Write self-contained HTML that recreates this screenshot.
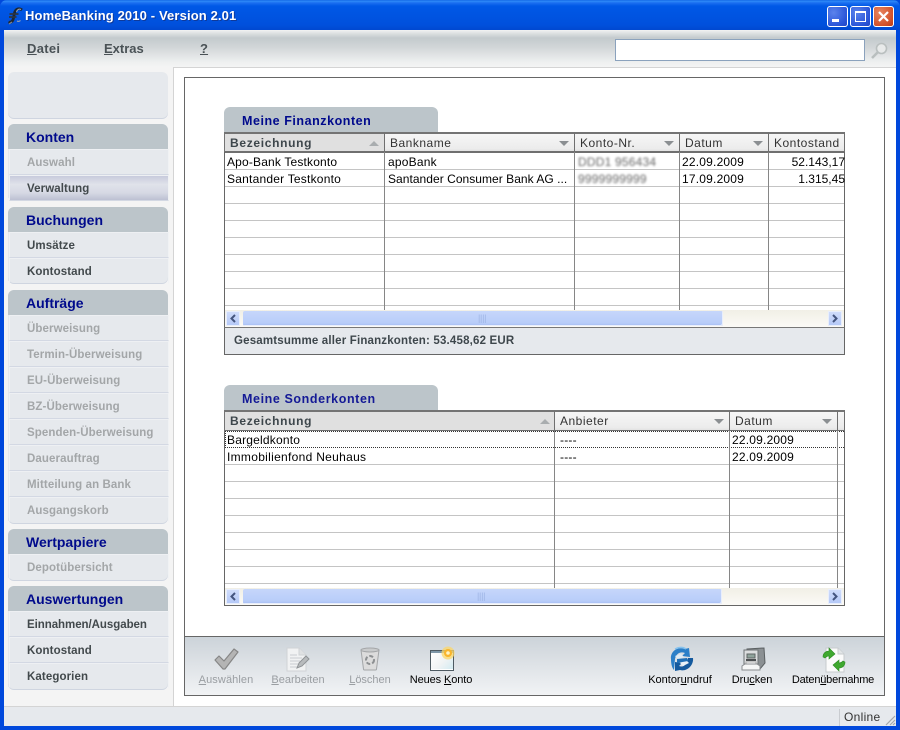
<!DOCTYPE html>
<html><head><meta charset="utf-8"><title>HomeBanking 2010</title>
<style>
html,body{margin:0;padding:0;background:#fff}
#w{position:relative;width:900px;height:730px;overflow:hidden;font-family:"Liberation Sans",sans-serif;font-size:12px;color:#000;background:#0048dc}
#w div,#w span.a,#w svg{position:absolute}
#w svg{overflow:visible}
.t{white-space:nowrap;line-height:14px}
.m{font-size:13px;font-weight:bold;color:#4a5256;top:42px;letter-spacing:.1px}
.g{left:8px;width:160px;background:#e6e9ed;border-radius:6px;box-shadow:0 1px 0 #cfd5e0}
.h{left:8px;width:160px;height:25px;background:#bcc5ca;border-radius:6px 6px 0 0}
.h b{position:absolute;left:18px;top:5px;font-size:14px;line-height:16px;color:#000a8c;white-space:nowrap}
.i{left:9px;width:158px;height:24px;border:1px solid #f0f2f4;border-bottom-color:#d3d8e3;border-top-color:#eef0f3;box-sizing:content-box}
.i b{position:absolute;left:17px;top:6px;font-size:11.5px;line-height:14px;white-space:nowrap;color:#42494c;letter-spacing:.1px}
.i.d b{color:#a3a6a8}
.tab{left:224px;width:214px;height:25px;background:#bcc5ca;border-radius:6px 6px 0 0}
.tab b{position:absolute;left:18px;top:7px;font-size:12.5px;line-height:15px;color:#000a8c;letter-spacing:.55px;white-space:nowrap}
.hd{background:linear-gradient(#f6f6f6,#ececec 85%,#e2e2e2);border-top:2px solid #747474;border-bottom:2px solid #6f6f6f;box-sizing:border-box;border-right:1px solid #6f6f6f}
.hd.s{background:#e0e0e0}
.hd span{position:absolute;left:5px;top:2px;line-height:14px;font-size:12px;letter-spacing:.5px;color:#333;white-space:nowrap}
.hd.s span{font-weight:bold;color:#3e474c;letter-spacing:.68px;font-size:12px}
.ar{width:0;height:0;border-left:5px solid transparent;border-right:5px solid transparent;border-top:5px solid #8b8f92}
.ar.u{border-top:0;border-bottom:5px solid #a9adaf}
.c{line-height:14px;white-space:nowrap;letter-spacing:.2px;color:#000}
.vl{width:1px;background:#868686}
.sb{background:linear-gradient(#f1efe6,#fbfaf6)}
.lbl{font-size:11px;line-height:13px;white-space:nowrap;text-align:center;color:#000}
.lbl.d{color:#9a9ea2}
u{text-decoration:underline}
</style></head><body><div id="w">

<!-- title bar -->
<div style="left:0;top:0;width:900px;height:30px;border-radius:7px 7px 0 0;background:linear-gradient(#0a5ce0 0,#2f8cf8 1px,#1a6df0 3px,#0058e6 6px,#0053e0 18px,#0050dc 25px,#0048d0 30px)"></div>
<svg style="left:7px;top:6px" width="18" height="20" viewBox="0 0 18 20"><path d="M15 4C12 1.500 8.500 3 7.500 7L6.500 12C6 15 4 17 1.500 16" fill="none" stroke="#1d2733" stroke-width="2.800"/><path d="M2.500 8h9M2 11h7.500" stroke="#2b3542" stroke-width="1.700"/><path d="M14 3.500C11.500 2.500 10 4 9.500 6M10 15c1 .5 2.500.5 3.500-.5" fill="none" stroke="#a1a8b3" stroke-width="1"/><path d="M5 16l-3 2" stroke="#7b8594" stroke-width="1.200"/></svg>
<div class="t" style="left:25px;top:9px;color:#fff;font-weight:bold;font-size:13px;letter-spacing:.13px;text-shadow:1px 1px 0 #0f3a9a">HomeBanking 2010 - Version 2.01</div>
<!-- window buttons -->
<div style="left:827px;top:6px;width:19px;height:19px;border:1px solid #fff;border-radius:3px;background:radial-gradient(circle at 30% 30%,#5b83ec,#2a55d8 70%,#2246c4)"></div>
<div style="left:832px;top:19px;width:7px;height:3px;background:#fff"></div>
<div style="left:850px;top:6px;width:19px;height:19px;border:1px solid #fff;border-radius:3px;background:radial-gradient(circle at 30% 30%,#5b83ec,#2a55d8 70%,#2246c4)"></div>
<div style="left:855px;top:11px;width:9px;height:8px;border:1px solid #fff;border-top:2px solid #fff"></div>
<div style="left:873px;top:6px;width:19px;height:19px;border:1px solid #fff;border-radius:3px;background:radial-gradient(circle at 30% 30%,#e88560,#d2512a 70%,#b93a16)"></div>
<svg style="left:873px;top:6px" width="21" height="21"><path d="M6 6l9 9M15 6l-9 9" stroke="#fff" stroke-width="2.200"/></svg>

<!-- client -->
<div style="left:4px;top:30px;width:892px;height:696px;background:#f4f4f4"></div>
<!-- menu band -->
<div style="left:4px;top:30px;width:892px;height:37px;background:linear-gradient(#f2f3f3 0,#dfe2e3 3px,#c3cacd 8px,#d3d7d9 18px,#eef0f0 32px,#f4f4f4 37px)"></div>
<div style="left:173px;top:67px;width:723px;height:1px;background:#d4d4d4"></div>
<div class="t m" style="left:27px;letter-spacing:.3px"><u>D</u>atei</div>
<div class="t m" style="left:104px;letter-spacing:0"><u>E</u>xtras</div>
<div class="t m" style="left:200px"><u>?</u></div>
<div style="left:615px;top:39px;width:248px;height:20px;background:#fff;border:1px solid #8ba2bd"></div>
<svg style="left:870px;top:41px" width="20" height="20"><circle cx="11.500" cy="7.500" r="5" fill="#e8eaea" stroke="#b9bfbf" stroke-width="1.600"/><path d="M8 11l-6 6" stroke="#b9bfbf" stroke-width="2.600"/></svg>

<!-- content -->
<div style="left:173px;top:67px;width:1px;height:639px;background:#d4d4d4"></div>
<div style="left:174px;top:68px;width:722px;height:638px;background:#fff"></div>
<div style="left:184px;top:77px;width:699px;height:617px;border:1px solid #666;background:#fff"></div>

<!-- sidebar -->
<div class="g" style="top:72px;height:46px"></div>

<div class="g" style="top:124px;height:76px"></div>
<div class="h" style="top:124px"><b>Konten</b></div>
<div class="i d" style="top:149px"><b>Auswahl</b></div>
<div class="i" style="top:175px;background:linear-gradient(#c8cbdc,#e0e2ea 35%,#d6d9e4 70%,#bcc0d2)"><b>Verwaltung</b></div>

<div class="g" style="top:207px;height:76px"></div>
<div class="h" style="top:207px"><b>Buchungen</b></div>
<div class="i" style="top:232px"><b>Umsätze</b></div>
<div class="i" style="top:258px;border-bottom-color:transparent"><b>Kontostand</b></div>

<div class="g" style="top:290px;height:233px"></div>
<div class="h" style="top:290px"><b>Aufträge</b></div>
<div class="i d" style="top:315px"><b>Überweisung</b></div>
<div class="i d" style="top:341px"><b>Termin-Überweisung</b></div>
<div class="i d" style="top:367px"><b>EU-Überweisung</b></div>
<div class="i d" style="top:393px"><b>BZ-Überweisung</b></div>
<div class="i d" style="top:419px"><b>Spenden-Überweisung</b></div>
<div class="i d" style="top:445px"><b>Dauerauftrag</b></div>
<div class="i d" style="top:471px"><b>Mitteilung an Bank</b></div>
<div class="i d" style="top:497px;height:23px;border-bottom-color:transparent"><b>Ausgangskorb</b></div>

<div class="g" style="top:529px;height:51px"></div>
<div class="h" style="top:529px"><b>Wertpapiere</b></div>
<div class="i d" style="top:554px;height:23px;border-bottom-color:transparent"><b>Depotübersicht</b></div>

<div class="g" style="top:586px;height:103px"></div>
<div class="h" style="top:586px"><b>Auswertungen</b></div>
<div class="i" style="top:611px"><b style="letter-spacing:-.05px">Einnahmen/Ausgaben</b></div>
<div class="i" style="top:637px"><b>Kontostand</b></div>
<div class="i" style="top:663px;height:23px;border-bottom-color:transparent"><b>Kategorien</b></div>

<!-- table 1 -->
<div class="tab" style="top:107px"><b>Meine Finanzkonten</b></div>
<div style="left:224px;top:153px;width:621px;height:157px;background:repeating-linear-gradient(#fff 0,#fff 16px,#c4c4c4 16px,#c4c4c4 17px)"></div>
<div class="hd s" style="left:224px;top:132px;width:161px;height:21px;border-left:1px solid #747474"><span>Bezeichnung</span><div class="ar u" style="left:144px;top:7px"></div></div>
<div class="hd" style="left:385px;top:132px;width:190px;height:21px"><span>Bankname</span><div class="ar" style="left:174px;top:7px"></div></div>
<div class="hd" style="left:575px;top:132px;width:105px;height:21px"><span>Konto-Nr.</span><div class="ar" style="left:89px;top:7px"></div></div>
<div class="hd" style="left:680px;top:132px;width:89px;height:21px"><span>Datum</span><div class="ar" style="left:73px;top:7px"></div></div>
<div class="hd" style="left:769px;top:132px;width:76px;height:21px"><span>Kontostand</span></div>
<div class="vl" style="left:224px;top:152px;height:203px;background:#666"></div>
<div class="vl" style="left:384px;top:152px;height:158px"></div>
<div class="vl" style="left:574px;top:152px;height:158px"></div>
<div class="vl" style="left:679px;top:152px;height:158px"></div>
<div class="vl" style="left:768px;top:152px;height:158px"></div>
<div class="vl" style="left:844px;top:152px;height:203px;background:#666"></div>

<div class="t c" style="left:227px;top:155px;letter-spacing:.17px">Apo-Bank Testkonto</div>
<div class="t c" style="left:227px;top:172px;letter-spacing:.22px">Santander Testkonto</div>
<div class="t c" style="left:388px;top:155px">apoBank</div>
<div class="t c" style="left:388px;top:172px;letter-spacing:.04px">Santander Consumer Bank AG ...</div>
<div class="t c" style="left:578px;top:155px;color:#666;filter:blur(1.100px)">DDD1 956434</div>
<div class="t c" style="left:578px;top:172px;color:#666;filter:blur(1.100px)">9999999999</div>
<div class="t c" style="left:682px;top:155px">22.09.2009</div>
<div class="t c" style="left:682px;top:172px">17.09.2009</div>
<div class="t c" style="right:55px;top:155px;width:80px;text-align:right;overflow:hidden;letter-spacing:0">52.143,17</div>
<div class="t c" style="right:55px;top:172px;width:80px;text-align:right;overflow:hidden;letter-spacing:0">1.315,45</div>

<!-- scrollbar 1 -->
<div class="sb" style="left:225px;top:310px;width:619px;height:17px"></div>
<div style="left:226px;top:311px;width:14px;height:15px;background:linear-gradient(#cfdcfb,#b5c9f7);border:1px solid #e8eefc;box-sizing:border-box"></div>
<svg style="left:226px;top:311px" width="14" height="15"><path d="M9 4L5.500 7.500 9 11" fill="none" stroke="#44557f" stroke-width="2"/></svg>
<div style="left:243px;top:311px;width:480px;height:15px;border-radius:2px;background:linear-gradient(#c6d6fb,#b8cdf9 80%,#a3bcf0);box-shadow:inset -1px -1px 0 #e8eefc"></div>
<div class="t" style="left:478px;top:312px;color:#9eb4e4;font-size:9px;line-height:13px;letter-spacing:-.3px">||||</div>
<div style="left:828px;top:311px;width:14px;height:15px;background:linear-gradient(#cfdcfb,#b5c9f7);border:1px solid #e8eefc;box-sizing:border-box"></div>
<svg style="left:828px;top:311px" width="14" height="15"><path d="M5 4L8.500 7.500 5 11" fill="none" stroke="#44557f" stroke-width="2"/></svg>
<div style="left:224px;top:327px;width:621px;height:28px;background:#e6e9ed;border:1px solid #666;border-top:1px solid #777;box-sizing:border-box"></div>
<div class="t" style="left:234px;top:334px;font-weight:bold;font-size:11.500px;color:#3e474c;letter-spacing:.18px">Gesamtsumme aller Finanzkonten: 53.458,62 EUR</div>

<!-- table 2 -->
<div class="tab" style="top:385px"><b style="color:#141a96;letter-spacing:.6px">Meine Sonderkonten</b></div>
<div style="left:224px;top:431px;width:621px;height:157px;background:repeating-linear-gradient(#fff 0,#fff 16px,#c4c4c4 16px,#c4c4c4 17px)"></div>
<div class="hd s" style="left:224px;top:410px;width:331px;height:22px;border-left:1px solid #747474"><span>Bezeichnung</span><div class="ar u" style="left:315px;top:7px"></div></div>
<div class="hd" style="left:555px;top:410px;width:175px;height:22px"><span>Anbieter</span><div class="ar" style="left:159px;top:7px"></div></div>
<div class="hd" style="left:730px;top:410px;width:108px;height:22px"><span>Datum</span><div class="ar" style="left:92px;top:7px"></div></div>
<div class="hd" style="left:838px;top:410px;width:7px;height:22px"></div>
<div style="left:225px;top:431px;width:619px;height:17px;border:1px dotted #333;border-right:0;box-sizing:border-box;background:#fff"></div>
<div class="vl" style="left:224px;top:432px;height:174px;background:#666"></div>
<div class="vl" style="left:554px;top:431px;height:157px"></div>
<div class="vl" style="left:729px;top:431px;height:157px"></div>
<div class="vl" style="left:837px;top:431px;height:157px"></div>
<div class="vl" style="left:844px;top:431px;height:175px;background:#666"></div>
<div class="t c" style="left:227px;top:433px">Bargeldkonto</div>
<div class="t c" style="left:227px;top:450px;letter-spacing:.3px">Immobilienfond Neuhaus</div>
<div class="t c" style="left:560px;top:433px">----</div>
<div class="t c" style="left:560px;top:450px">----</div>
<div class="t c" style="left:732px;top:433px">22.09.2009</div>
<div class="t c" style="left:732px;top:450px">22.09.2009</div>
<!-- scrollbar 2 -->
<div class="sb" style="left:225px;top:588px;width:619px;height:17px"></div>
<div style="left:226px;top:589px;width:14px;height:15px;background:linear-gradient(#cfdcfb,#b5c9f7);border:1px solid #e8eefc;box-sizing:border-box"></div>
<svg style="left:226px;top:589px" width="14" height="15"><path d="M9 4L5.500 7.500 9 11" fill="none" stroke="#44557f" stroke-width="2"/></svg>
<div style="left:243px;top:589px;width:479px;height:15px;border-radius:2px;background:linear-gradient(#c6d6fb,#b8cdf9 80%,#a3bcf0);box-shadow:inset -1px -1px 0 #e8eefc"></div>
<div class="t" style="left:477px;top:590px;color:#9eb4e4;font-size:9px;line-height:13px;letter-spacing:-.3px">||||</div>
<div style="left:828px;top:589px;width:14px;height:15px;background:linear-gradient(#cfdcfb,#b5c9f7);border:1px solid #e8eefc;box-sizing:border-box"></div>
<svg style="left:828px;top:589px" width="14" height="15"><path d="M5 4L8.500 7.500 5 11" fill="none" stroke="#44557f" stroke-width="2"/></svg>
<div style="left:224px;top:605px;width:621px;height:1px;background:#666"></div>

<!-- toolbar -->
<div style="left:185px;top:636px;width:699px;height:58px;border-top:1px solid #666;background:linear-gradient(#ccd3d9,#dfe3e7 50%,#f1f3f5)"></div>
<svg style="left:213px;top:647px" width="26" height="24"><path d="M2 13l4-4 5 5L21 2l4 3-13 17h-2z" fill="#b4b4b4" stroke="#868686" stroke-width="1.200" stroke-linejoin="round"/></svg>
<svg style="left:286px;top:647px" width="24" height="26"><path d="M1 1h12l7 7v16H1z" fill="#f1f2f3" stroke="#d0d3d6"/><path d="M13 1v7h7" fill="#dfe1e3" stroke="#cfd2d5"/><path d="M4 8h7M4 11h12M4 14h10M4 17h8M4 20h7" stroke="#c9ccd0"/><path d="M11 21l2-5 7-7 3 3-7 7z" fill="#b8bbbd" stroke="#8f9396"/></svg>
<svg style="left:360px;top:647px" width="20" height="24"><path d="M1 3h18l-2.500 19a1 1 0 0 1-1 1h-11a1 1 0 0 1-1-1z" fill="#dcdcdc" stroke="#a4a6a8"/><ellipse cx="10" cy="3" rx="9" ry="2" fill="#c9cbcc" stroke="#a4a6a8"/><circle cx="10" cy="13" r="4" fill="none" stroke="#8d9092" stroke-width="2" stroke-dasharray="4 2"/></svg>
<div style="left:430px;top:650px;width:22px;height:19px;border:1px solid #4e5a62;background:linear-gradient(#7e97a8 0,#7e97a8 2px,#fff 3px);box-sizing:content-box"></div>
<div style="left:431px;top:653px;width:22px;height:16px;background:linear-gradient(135deg,#fff,#f0f3f4 55%,#d3ebf2)"></div>
<svg style="left:441px;top:646px" width="14" height="14"><circle cx="7" cy="7" r="6.500" fill="#fbd76a" opacity=".75"/><circle cx="7" cy="7" r="4" fill="#f9b52c"/><circle cx="7" cy="7" r="1.800" fill="#fff4c4"/></svg>

<svg style="left:670px;top:647px" width="24" height="25"><path d="M1 12C0 5 7-1 15 2l4-1 1 9-8-1 3-3c-5-2-9 1-10 6l-1 11C2 21 1 17 1 12z" fill="#2b7fc8"/><path d="M5 2c4-2 8-2 11 0" stroke="#85c2ee" stroke-width="1.500" fill="none"/><path d="M23 11c1 7-6 14-13 12l-5 1 0-9 7 1-3 3c5 2 8-2 9-8z" fill="#155a9e"/><path d="M5 9l6-2 3 3-6 2z" fill="#dcebf6"/><path d="M10 16l6-3 3 3-6 3z" fill="#e8f1f8"/><path d="M7 12l10-1 1 3-11 2z" fill="#1f6fb6"/></svg>
<svg style="left:741px;top:647px" width="25" height="25"><path d="M6 2l17-1 1 15-5 6H6z" fill="#8b9093" stroke="#5b6062"/><path d="M3 3h14v14H3z" fill="#dcdedf" stroke="#6e7375"/><path d="M6 7h8v4H6z" fill="#8fa39b" stroke="#5f6665"/><path d="M5 13h10" stroke="#4c4f51" stroke-width="2"/><path d="M5 15h10v4H5z" fill="#fff" stroke="#aaa"/><path d="M1 19l3-2h12l3 2v4H1z" fill="#f6f7f7" stroke="#8a8d90"/></svg>
<svg style="left:822px;top:647px" width="24" height="26"><path d="M4 1h12l6 6v18H4z" fill="#fbfbfb" stroke="#c7cbce"/><path d="M16 1v6h6" fill="#e2e5e7" stroke="#c7cbce"/><path d="M1 10c0-4 3-6 6-6V1l6 6-6 5V9c-2 0-3 1-4 2z" fill="#3fa82f" stroke="#2c8a22" stroke-width=".6"/><path d="M23 15c0 4-3 6-6 6v3l-6-6 6-5v3c2 0 3-1 4-2z" fill="#3fa82f" stroke="#2c8a22" stroke-width=".6"/></svg>

<div class="lbl d" style="left:186px;top:674px;width:80px;letter-spacing:.1px"><u>A</u>uswählen</div>
<div class="lbl d" style="left:258px;top:674px;width:80px"><u>B</u>earbeiten</div>
<div class="lbl d" style="left:330px;top:674px;width:80px"><u>L</u>öschen</div>
<div class="lbl" style="left:401px;top:674px;width:80px;letter-spacing:-.1px">Neues <u>K</u>onto</div>
<div class="lbl" style="left:640px;top:674px;width:80px">Kontor<u>u</u>ndruf</div>
<div class="lbl" style="left:712px;top:674px;width:80px;letter-spacing:-.05px">Dru<u>c</u>ken</div>
<div class="lbl" style="left:783px;top:674px;width:100px;letter-spacing:-.2px">Daten<u>ü</u>bernahme</div>

<!-- status bar -->
<div style="left:4px;top:706px;width:892px;height:20px;background:#e6e9ed;border-top:1px solid #d4d4d4;box-sizing:border-box"></div>
<div style="left:839px;top:709px;width:1px;height:17px;background:#c9ccd0"></div>
<div class="t" style="left:844px;top:710px;color:#333;letter-spacing:.3px">Online</div>
<svg style="left:885px;top:714px" width="11" height="12"><path d="M10 2l-9 9M10 6l-5 5M10 9l-2 2" stroke="#a4a8ac" stroke-width="1.200"/></svg>
</div></body></html>
